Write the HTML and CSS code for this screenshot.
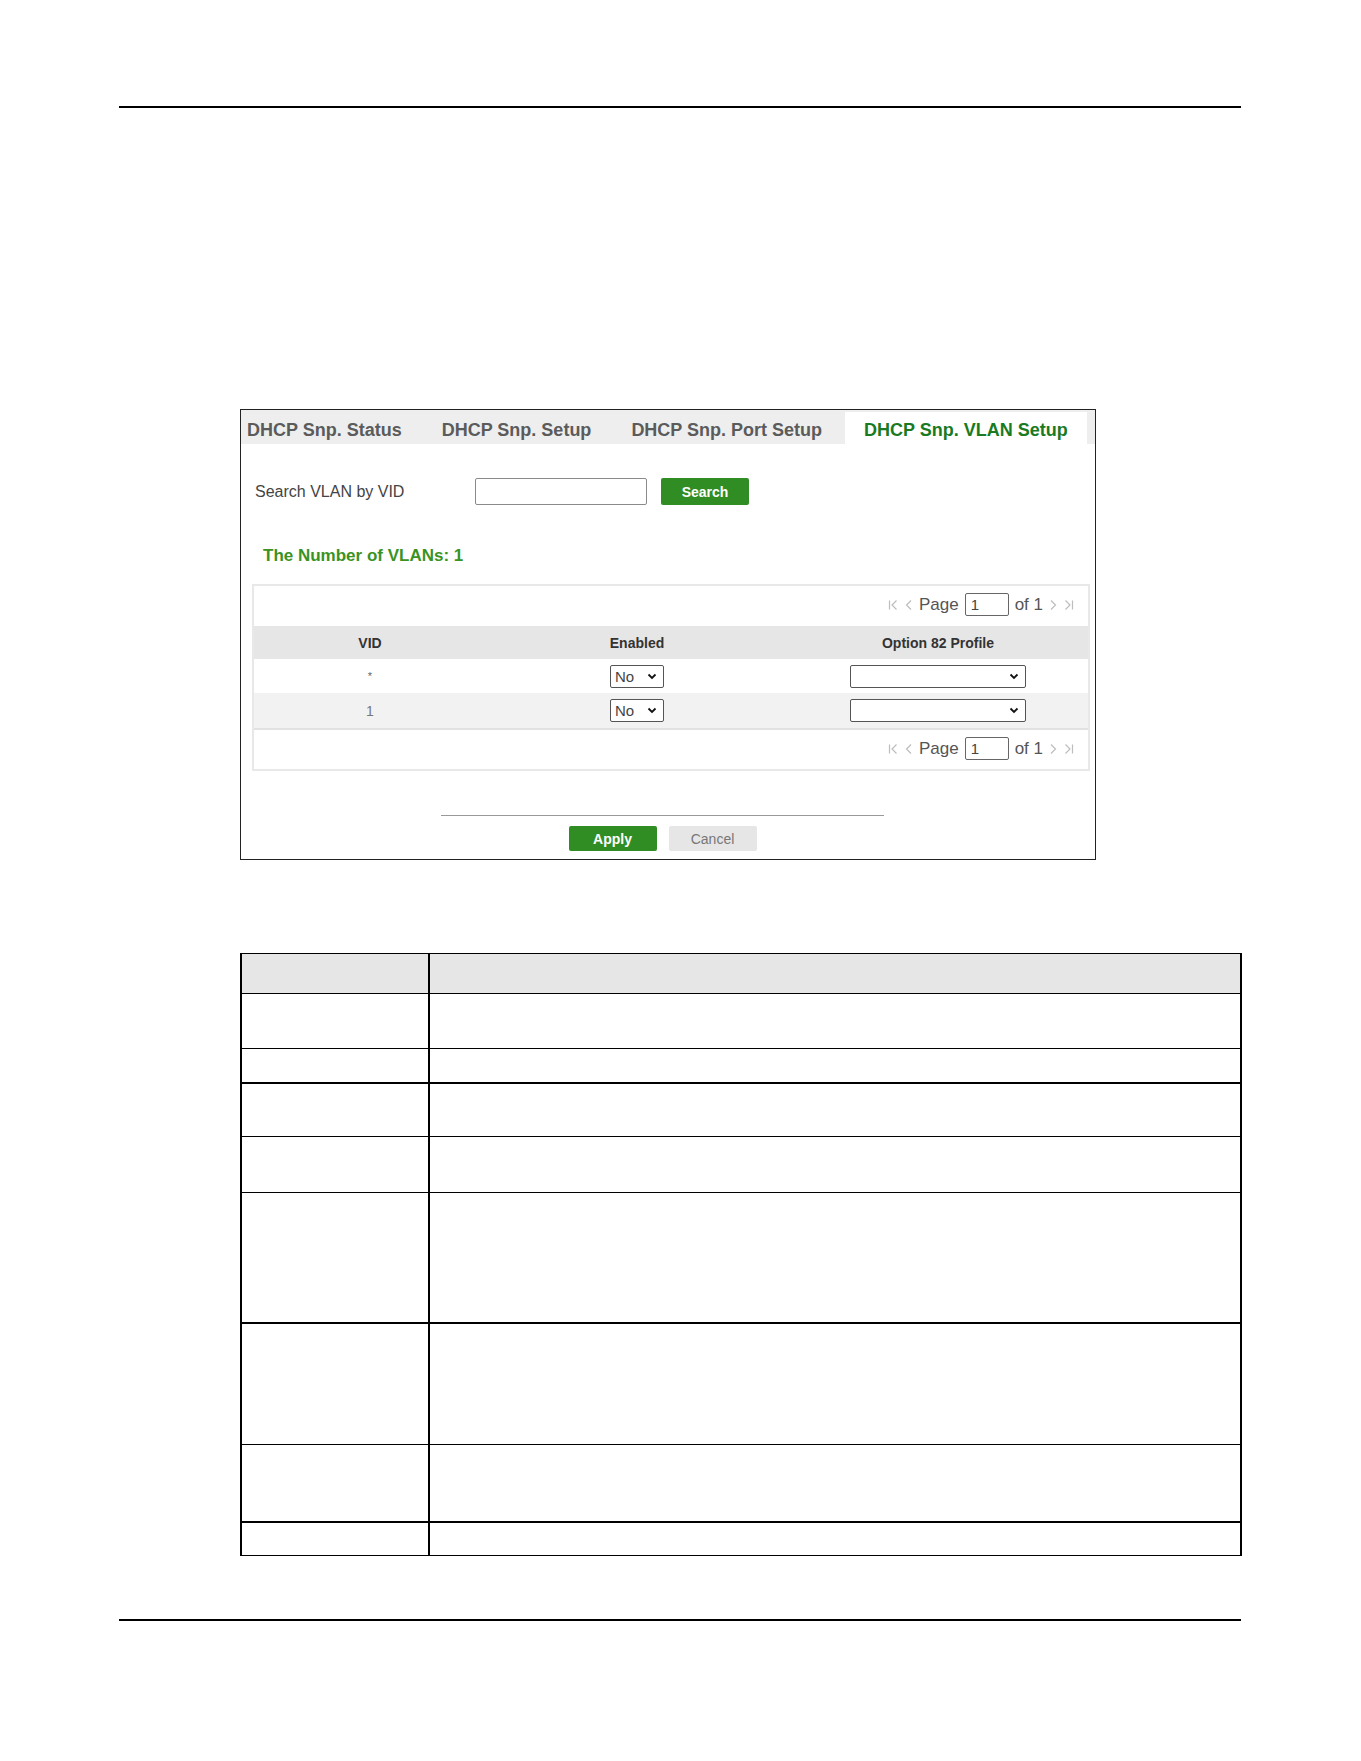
FILE: index.html
```html
<!DOCTYPE html>
<html lang="en">
<head>
<meta charset="utf-8">
<title>DHCP Snooping VLAN Setup</title>
<link rel="stylesheet" href="styles.css">
</head>
<body>
<div class="page">
  <div class="rule"></div>

  <section class="panel">
    <nav class="tabs">
      <span class="tab first">DHCP Snp. Status</span>
      <span class="tab">DHCP Snp. Setup</span>
      <span class="tab">DHCP Snp. Port Setup</span>
      <span class="tab active">DHCP Snp. VLAN Setup</span>
    </nav>

    <div class="search-row">
      <label class="search-label">Search VLAN by VID</label>
      <div class="text-input"></div>
      <button class="btn btn-green btn-search">Search</button>
    </div>

    <h2 class="count">The Number of VLANs: 1</h2>

    <div class="grid-box">
      <div class="pager">
        <svg class="pg-icon" width="11" height="12" viewBox="0 0 11 12"><path d="M1.5 1.5v9M8.5 1.5L4 6l4.5 4.5" fill="none" stroke="#bdbdbd" stroke-width="1.2"/></svg>
        <svg class="pg-icon" width="8" height="12" viewBox="0 0 8 12"><path d="M6 1.5L1.5 6 6 10.5" fill="none" stroke="#bdbdbd" stroke-width="1.2"/></svg>
        <span class="pg-text">Page</span>
        <div class="pg-input">1</div>
        <span class="pg-text">of 1</span>
        <svg class="pg-icon" width="8" height="12" viewBox="0 0 8 12"><path d="M2 1.5L6.5 6 2 10.5" fill="none" stroke="#bdbdbd" stroke-width="1.2"/></svg>
        <svg class="pg-icon" width="11" height="12" viewBox="0 0 11 12"><path d="M2.5 1.5L7 6l-4.5 4.5M9.5 1.5v9" fill="none" stroke="#bdbdbd" stroke-width="1.2"/></svg>
      </div>

      <div class="grid-row head">
        <div class="cell">VID</div>
        <div class="cell">Enabled</div>
        <div class="cell">Option 82 Profile</div>
      </div>
      <div class="grid-row">
        <div class="cell star">*</div>
        <div class="cell">
          <div class="select small"><span>No</span><svg width="10" height="7" viewBox="0 0 10 7"><path d="M1.5 1.5L5 5l3.5-3.5" fill="none" stroke="#111" stroke-width="1.8"/></svg></div>
        </div>
        <div class="cell">
          <div class="select wide"><span></span><svg width="10" height="7" viewBox="0 0 10 7"><path d="M1.5 1.5L5 5l3.5-3.5" fill="none" stroke="#111" stroke-width="1.8"/></svg></div>
        </div>
      </div>
      <div class="grid-row alt">
        <div class="cell">1</div>
        <div class="cell">
          <div class="select small"><span>No</span><svg width="10" height="7" viewBox="0 0 10 7"><path d="M1.5 1.5L5 5l3.5-3.5" fill="none" stroke="#111" stroke-width="1.8"/></svg></div>
        </div>
        <div class="cell">
          <div class="select wide"><span></span><svg width="10" height="7" viewBox="0 0 10 7"><path d="M1.5 1.5L5 5l3.5-3.5" fill="none" stroke="#111" stroke-width="1.8"/></svg></div>
        </div>
      </div>

      <div class="pager bottom">
        <svg class="pg-icon" width="11" height="12" viewBox="0 0 11 12"><path d="M1.5 1.5v9M8.5 1.5L4 6l4.5 4.5" fill="none" stroke="#bdbdbd" stroke-width="1.2"/></svg>
        <svg class="pg-icon" width="8" height="12" viewBox="0 0 8 12"><path d="M6 1.5L1.5 6 6 10.5" fill="none" stroke="#bdbdbd" stroke-width="1.2"/></svg>
        <span class="pg-text">Page</span>
        <div class="pg-input">1</div>
        <span class="pg-text">of 1</span>
        <svg class="pg-icon" width="8" height="12" viewBox="0 0 8 12"><path d="M2 1.5L6.5 6 2 10.5" fill="none" stroke="#bdbdbd" stroke-width="1.2"/></svg>
        <svg class="pg-icon" width="11" height="12" viewBox="0 0 11 12"><path d="M2.5 1.5L7 6l-4.5 4.5M9.5 1.5v9" fill="none" stroke="#bdbdbd" stroke-width="1.2"/></svg>
      </div>
    </div>

    <div class="actions">
      <div class="actions-line"></div>
      <div class="actions-buttons">
        <button class="btn btn-green btn-apply">Apply</button>
        <button class="btn btn-grey">Cancel</button>
      </div>
    </div>
  </section>

  <div class="desc">
    <div class="drow h-head"><div class="dlabel"></div><div class="dtext"></div></div>
    <div class="drow h55"><div class="dlabel"></div><div class="dtext"></div></div>
    <div class="drow h34"><div class="dlabel"></div><div class="dtext"></div></div>
    <div class="drow h54 thick"><div class="dlabel"></div><div class="dtext"></div></div>
    <div class="drow h56"><div class="dlabel"></div><div class="dtext"></div></div>
    <div class="drow h130"><div class="dlabel"></div><div class="dtext"></div></div>
    <div class="drow h122 thick"><div class="dlabel"></div><div class="dtext"></div></div>
    <div class="drow h77"><div class="dlabel"></div><div class="dtext"></div></div>
    <div class="drow h34b thick"><div class="dlabel"></div><div class="dtext"></div></div>
  </div>

  <div class="rule rule-bottom"></div>
</div>
</body>
</html>
```

FILE: styles.css
```css
* { box-sizing: border-box; }

body {
  margin: 0;
  background: #fff;
  font-family: "Liberation Sans", Arial, sans-serif;
  color: #333;
}

.page {
  width: 1122px;
  margin-left: 119px;
  padding-top: 106px;
}

.rule {
  height: 2px;
  background: #000;
}

.rule-bottom {
  margin-top: 63px;
}

/* ---------- configuration panel ---------- */
.panel {
  margin: 301px 0 0 121px;
  width: 856px;
  height: 451px;
  border: 1px solid #222;
}

.tabs {
  display: flex;
  align-items: flex-start;
  height: 34px;
  background: #eeeeee;
}

.tab {
  padding: 6px 20px 0;
  line-height: 28px;
  font-size: 18px;
  font-weight: bold;
  color: #5b5b5b;
  white-space: nowrap;
}

.tab.first { padding-left: 6px; }

.tab.active {
  margin-top: 2px;
  margin-left: 3px;
  height: 32px;
  padding: 4px 19px 0;
  background: #fff;
  color: #197a1f;
}

.search-row {
  display: flex;
  align-items: center;
  margin-top: 34px;
  height: 27px;
}

.search-label {
  width: 234px;
  padding-left: 14px;
  font-size: 16px;
  color: #444;
}

.text-input {
  width: 172px;
  height: 27px;
  border: 1px solid #8a8a8a;
  border-radius: 2px;
  background: #fff;
}

.btn {
  height: 25px;
  border: none;
  border-radius: 2px;
  font-family: "Liberation Sans", Arial, sans-serif;
  font-size: 14px;
  padding: 0;
}

.btn-green {
  background: #2f8d24;
  color: #fff;
  font-weight: bold;
}

.btn-search {
  margin-left: 14px;
  width: 88px;
  height: 27px;
}

.count {
  margin: 39px 0 0 22px;
  font-size: 17px;
  line-height: 24px;
  font-weight: bold;
  color: #3a931f;
}

/* ---------- VLAN grid ---------- */
.grid-box {
  margin: 16px 0 0 11px;
  width: 838px;
  border: 2px solid #e8e8e8;
}

.pager {
  display: flex;
  justify-content: flex-end;
  align-items: center;
  height: 40px;
  padding: 0 14px 3px 0;
  gap: 6px;
}

.pager.bottom {
  height: 41px;
  padding-bottom: 2px;
  border-top: 2px solid #e2e2e2;
}

.pg-icon { display: block; }

.pg-text {
  font-size: 17px;
  color: #555;
}

.pg-input {
  width: 44px;
  height: 23px;
  border: 1px solid #666;
  border-radius: 2px;
  font-size: 15px;
  line-height: 21px;
  padding-left: 5px;
  color: #444;
}

.grid-row {
  display: grid;
  grid-template-columns: 232px 302px 300px;
  height: 34px;
  align-items: center;
  background: #fff;
}

.grid-row.head {
  height: 33px;
  background: #e6e6e6;
  font-size: 13.5px;
  font-weight: bold;
  color: #333;
}

.grid-row.alt {
  height: 35px;
  background: #f2f2f2;
}

.cell {
  display: flex;
  justify-content: center;
  align-items: center;
  font-size: 14px;
  color: #777;
}

.grid-row.head .cell { color: #333; }

.cell.star { font-size: 11px; color: #666; }

.select {
  display: flex;
  align-items: center;
  justify-content: space-between;
  height: 23px;
  padding: 0 6px 0 4px;
  border: 1px solid #555;
  border-radius: 2px;
  background: #fff;
  font-size: 15px;
  color: #444;
}

.select.small { width: 54px; }
.select.wide { width: 176px; }

/* ---------- apply / cancel ---------- */
.actions {
  margin: 44px 0 0 200px;
  width: 443px;
}

.actions-line {
  height: 1px;
  background: #999;
}

.actions-buttons {
  display: flex;
  justify-content: center;
  gap: 12px;
  margin-top: 10px;
}

.btn-apply { width: 88px; }

.btn-grey {
  width: 88px;
  background: #e6e6e6;
  color: #777;
}

/* ---------- field description table ---------- */
.desc {
  margin: 93px 0 0 121px;
  width: 1002px;
  border-left: 2px solid #000;
  border-right: 2px solid #000;
  border-bottom: 1px solid #000;
}

.drow {
  display: grid;
  grid-template-columns: 188px 1fr;
  border-top: 1px solid #000;
}

.drow.thick { border-top: 2px solid #000; }

.dlabel { border-right: 2px solid #000; }

.h-head { height: 40px; background: #e6e6e6; }
.h55 { height: 55px; }
.h34 { height: 34px; }
.h54 { height: 54px; }
.h56 { height: 56px; }
.h130 { height: 130px; }
.h122 { height: 122px; }
.h77 { height: 77px; }
.h34b { height: 34px; }
```
